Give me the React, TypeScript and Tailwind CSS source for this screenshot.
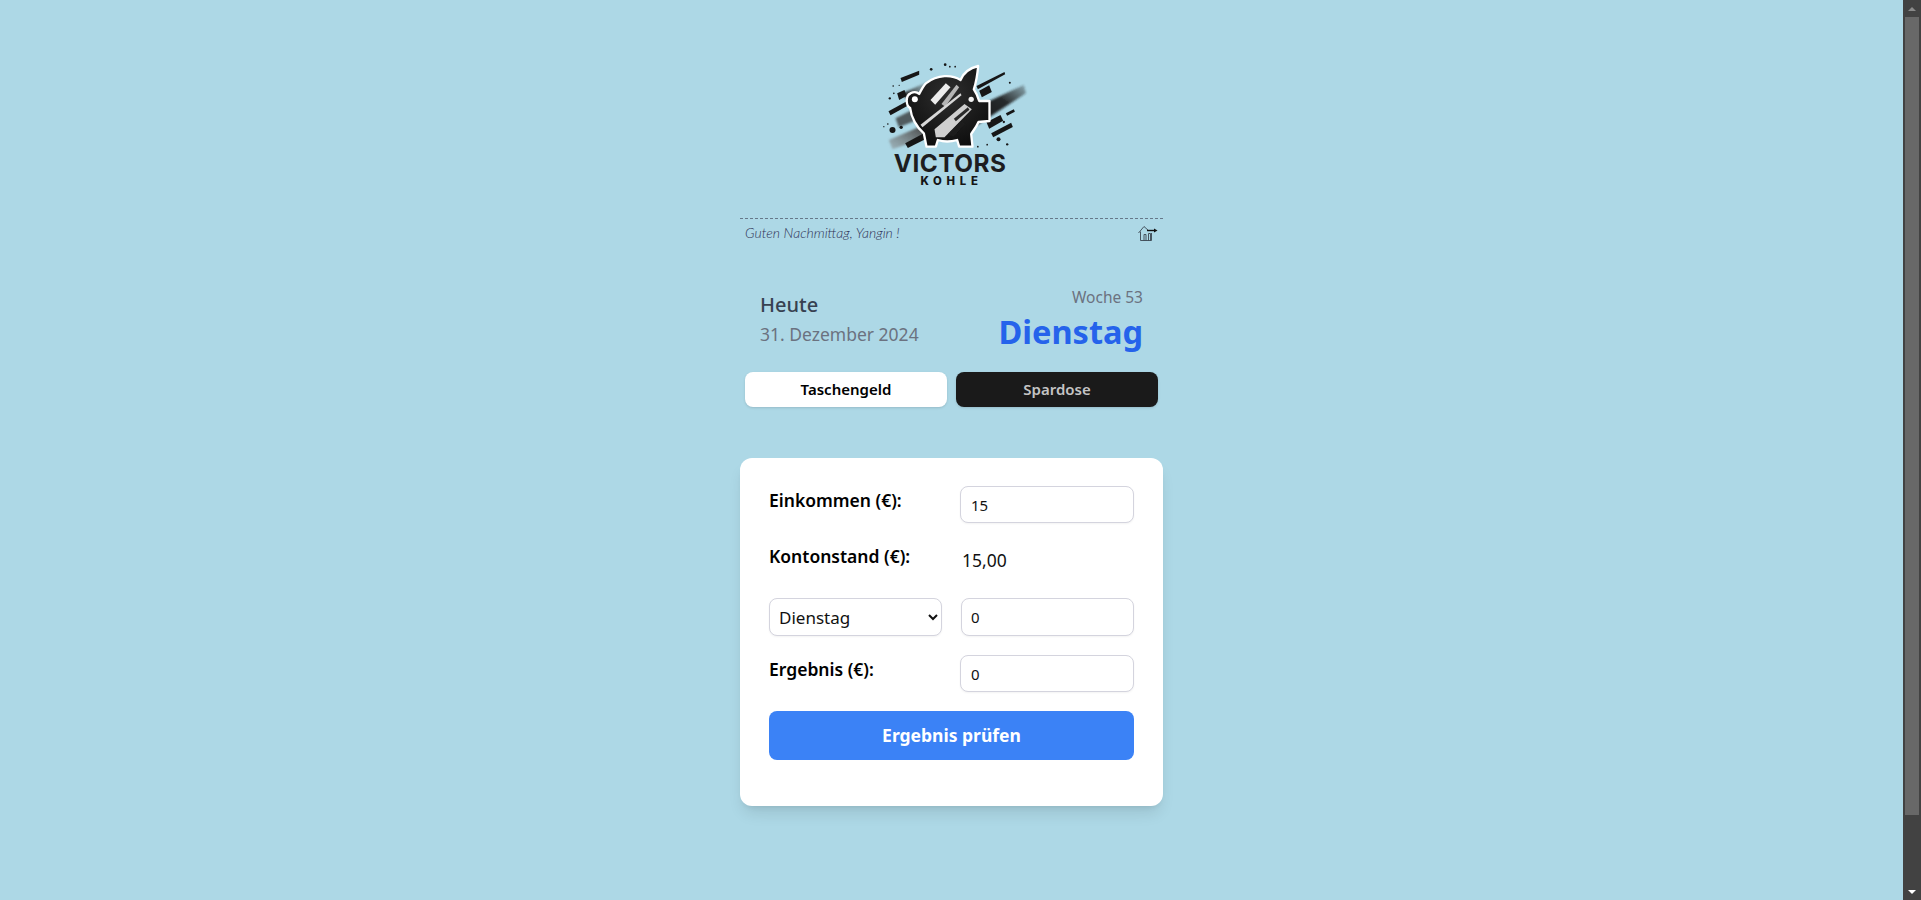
import React from "react";

function Logo() {
  const dashes = [
    "M120 84 L176 62 L176 74 L124 96 Z",
    "M110 130 L132 120 L138 138 L116 150 Z",
    "M84 184 L150 148 L155 160 L90 196 Z",
    "M134 280 L190 250 L197 266 L142 294 Z",
    "M348 108 L432 66 L434 73 L352 118 Z",
    "M356 122 L386 106 L394 126 L364 142 Z",
    "M392 250 L452 218 L457 231 L398 262 Z",
    "M436 190 L460 178 L463 185 L440 197 Z",
    "M378 217 L420 195 L428 212 L386 236 Z",
  ];
  const dots = [
    [96, 240, 9],[122, 232, 5],[88, 145, 3.5],[100, 130, 2.5],[98, 108, 2.5],[116, 106, 2],
    [212, 58, 4],[254, 44, 4],[268, 50, 2.5],[284, 50, 2.5],[448, 98, 3],[414, 268, 6],
    [440, 283, 3.5],[430, 216, 3.5],[352, 290, 2.5],[380, 284, 2.5],[70, 230, 2],[82, 222, 2.5],
  ];
  return (
    <svg width="180" height="150" viewBox="4.5 0 540 450" className="block">
      <defs>
        <linearGradient id="sweepR" x1="0" y1="1" x2="1" y2="0">
          <stop offset="0" stopColor="#0d0d0d" />
          <stop offset="0.6" stopColor="#1a1a1a" stopOpacity="0.9" />
          <stop offset="1" stopColor="#333" stopOpacity="0.3" />
        </linearGradient>
        <linearGradient id="sweepL" x1="0" y1="1" x2="1" y2="0">
          <stop offset="0" stopColor="#888" stopOpacity="0.45" />
          <stop offset="1" stopColor="#3a3a3a" />
        </linearGradient>
        <linearGradient id="sweepT" x1="0" y1="0.6" x2="1" y2="0.4">
          <stop offset="0" stopColor="#222" />
          <stop offset="1" stopColor="#555" stopOpacity="0.2" />
        </linearGradient>
        <radialGradient id="body" cx="0.5" cy="0.35" r="0.7">
          <stop offset="0" stopColor="#2e2e2e" />
          <stop offset="1" stopColor="#0c0c0c" />
        </radialGradient>
        <filter id="soft"><feGaussianBlur stdDeviation="3" /></filter>
        <filter id="soft1"><feGaussianBlur stdDeviation="1" /></filter>
      </defs>
      <path d="M340 175 L490 105 L496 130 L350 225 Z" fill="url(#sweepR)" filter="url(#soft)" />
      <path d="M85 270 L190 225 L200 262 L96 298 Z" fill="url(#sweepL)" filter="url(#soft)" />
      <path d="M125 130 L210 92 L215 108 L140 150 Z" fill="url(#sweepT)" filter="url(#soft)" />
      <path d="M105 205 L165 175 L170 210 L115 232 Z" fill="#333" opacity="0.75" filter="url(#soft)" />
      {dashes.map((d, i) => <path key={i} d={d} fill="#161616" />)}
      {dots.map(([x, y, r], i) => <circle key={i} cx={x} cy={y} r={r} fill="#161616" />)}
      <path
        d="M196 100 C232 72 275 74 300 90 C308 70 328 54 353 48 C351 72 347 96 340 118 C347 128 352 140 356 153 L387 153 L387 213 L354 216 C347 232 337 244 332 252 L336 290 L296 290 L290 270 C270 276 250 276 232 270 L226 290 L198 290 L190 250 C168 232 152 202 149 174 C136 166 134 138 150 130 C163 123 171 127 176 132 C182 120 188 108 196 100 Z"
        fill="url(#body)"
        stroke="#ffffff"
        strokeWidth="7"
        strokeLinejoin="round"
      />
      <circle cx="163" cy="148" r="9" fill="#fff" />
      <circle cx="332" cy="148" r="8" fill="#f2f2f2" />
      <g filter="url(#soft1)">
        <path d="M210 150 L256 100 L270 112 L224 164 Z" fill="#ededed" />
        <path d="M243 162 L288 104 L296 112 L254 170 Z" fill="#b5b5b5" />
        <path d="M180 224 L300 130 L303 136 L186 232 Z" fill="#d8d8d8" />
        <path d="M222 238 L312 162 L334 178 L252 262 L226 262 Z" fill="#cfcfcf" />
        <path d="M264 252 L300 214 L314 222 L278 260 Z" fill="#1c1c1c" />
        <path d="M280 206 L322 172 L327 179 L286 214 Z" fill="#2a2a2a" />
      </g>
      <text
        x="100"
        y="366"
        fill="#1d1d1f"
        textLength="336"
        className="font-bold"
        style={{ fontFamily: '"Inter", "Liberation Sans", sans-serif', fontSize: 73 }}
      >
        VICTORS
      </text>
      <text
        x="180"
        y="405"
        fill="#151515"
        textLength="172"
        className="font-extrabold"
        style={{ fontFamily: '"Inter", "Liberation Sans", sans-serif', fontSize: 34 }}
      >
        KOHLE
      </text>
    </svg>
  );
}

function HomeIcon() {
  return (
    <svg width="20" height="16" viewBox="0 0 20 16" fill="none" stroke="#3a4650" strokeWidth="0.9" className="block">
      <path d="M0.5 8 L6 1.5 L11 6" />
      <path d="M2.5 6.5 V15.5 H13.5 V8" />
      <path d="M6 15.5 V9.5 H8 V15.5" />
      <path d="M10.5 15.5 V8.5 H12.5 V15.5" />
      <path d="M9 5.5 H17" strokeWidth="1.4" stroke="#111" />
      <path d="M16 3.5 L19.5 5.5 L16 7.5 Z" fill="#111" stroke="none" />
    </svg>
  );
}

function Field({ value }: { value: string }) {
  return (
    <input
      type="text"
      defaultValue={value}
      className="w-[174px] h-[37px] rounded-lg border border-[#d4d4de] bg-white pl-[10px] text-[15px] text-[#111] shadow-[0_1px_2px_rgba(0,0,0,0.05)]"
    />
  );
}

const labelCls = "text-[17.5px] leading-[28px] font-semibold text-black";

export default function App() {
  return (
    <div
      className="flex h-[900px] overflow-hidden bg-[#add8e6]"
      style={{ fontFamily: '"Noto Sans", "Open Sans", sans-serif' }}
    >
      <main className="flex-1 flex flex-col items-center">
        <div className="w-[423px]">
          <div className="flex justify-center pt-[50px] pb-[18px]">
            <Logo />
          </div>

          <div className="border-t border-dashed border-[#66788a] h-[56px] flex items-start justify-between px-[5px] pt-[3px]">
            <span
              className="text-[14px] leading-[22px] text-[#2f3356] italic font-light"
              style={{ fontFamily: '"Lato", sans-serif' }}
            >
              Guten Nachmittag, Yangin !
            </span>
            <div className="pt-[3px]"><HomeIcon /></div>
          </div>

          <div className="h-[95px] px-[20px] pt-[10px] flex justify-between">
            <div className="pt-[8px]">
              <div className="text-[20px] leading-[26px] font-medium text-[#374151]">Heute</div>
              <div className="text-[17.5px] leading-[26px] mt-[3px] text-[#6b7280]">31. Dezember 2024</div>
            </div>
            <div className="text-right pt-[3px]">
              <div className="text-[15.5px] leading-[20px] text-[#6b7280]">Woche 53</div>
              <div className="text-[32.5px] leading-[44px] mt-[3px] font-bold text-[#2563eb]">Dienstag</div>
            </div>
          </div>

          <div className="flex gap-[9px] px-[5px] mt-[3px]">
            <button className="flex-1 h-[35px] rounded-lg bg-white text-[15px] font-semibold text-black shadow-sm">
              Taschengeld
            </button>
            <button className="flex-1 h-[35px] rounded-lg bg-[#1a1a1a] text-[15px] font-semibold text-[#c4c4c4] shadow-sm">
              Spardose
            </button>
          </div>

          <div className="mt-[51px] rounded-xl bg-white pt-[28px] pb-[46px] px-[29px] shadow-lg flex flex-col gap-[19px]">
            <div className="flex justify-between">
              <label className={labelCls}>Einkommen (€):</label>
              <Field value="15" />
            </div>
            <div className="flex justify-between h-[37px]">
              <label className={labelCls}>Kontonstand (€):</label>
              <div className="w-[174px] pl-[2px] pt-[6px] text-[17.5px] leading-[24px] text-[#111]">15,00</div>
            </div>
            <div className="flex justify-between">
              <select
                defaultValue="Dienstag"
                className="w-[173px] h-[38px] rounded-lg border border-[#d4d4de] bg-white pl-[5px] text-[17px] text-[#111] shadow-[0_1px_2px_rgba(0,0,0,0.05)]"
              >
                <option>Montag</option>
                <option>Dienstag</option>
                <option>Mittwoch</option>
              </select>
              <input
                type="text"
                defaultValue="0"
                className="w-[173px] h-[38px] rounded-lg border border-[#d4d4de] bg-white pl-[9px] text-[15px] text-[#111] shadow-[0_1px_2px_rgba(0,0,0,0.05)]"
              />
            </div>
            <div className="flex justify-between">
              <label className={labelCls}>Ergebnis (€):</label>
              <Field value="0" />
            </div>
            <button className="h-[49px] rounded-lg bg-[#3b82f6] text-[17.5px] font-bold text-white">
              Ergebnis prüfen
            </button>
          </div>
        </div>
      </main>

      <div className="w-[18px] h-full bg-[#424242] flex flex-col items-center">
        <div className="h-[17px] flex items-center justify-center">
          <div className="w-0 h-0 border-x-[4px] border-x-transparent border-b-[4px] border-b-[#8a8a8a]" />
        </div>
        <div className="w-[14px] h-[798px] bg-[#686868]" />
        <div className="flex-1 flex items-end justify-center pb-[6px]">
          <div className="w-0 h-0 border-x-[4px] border-x-transparent border-t-[4px] border-t-white" />
        </div>
      </div>
    </div>
  );
}
